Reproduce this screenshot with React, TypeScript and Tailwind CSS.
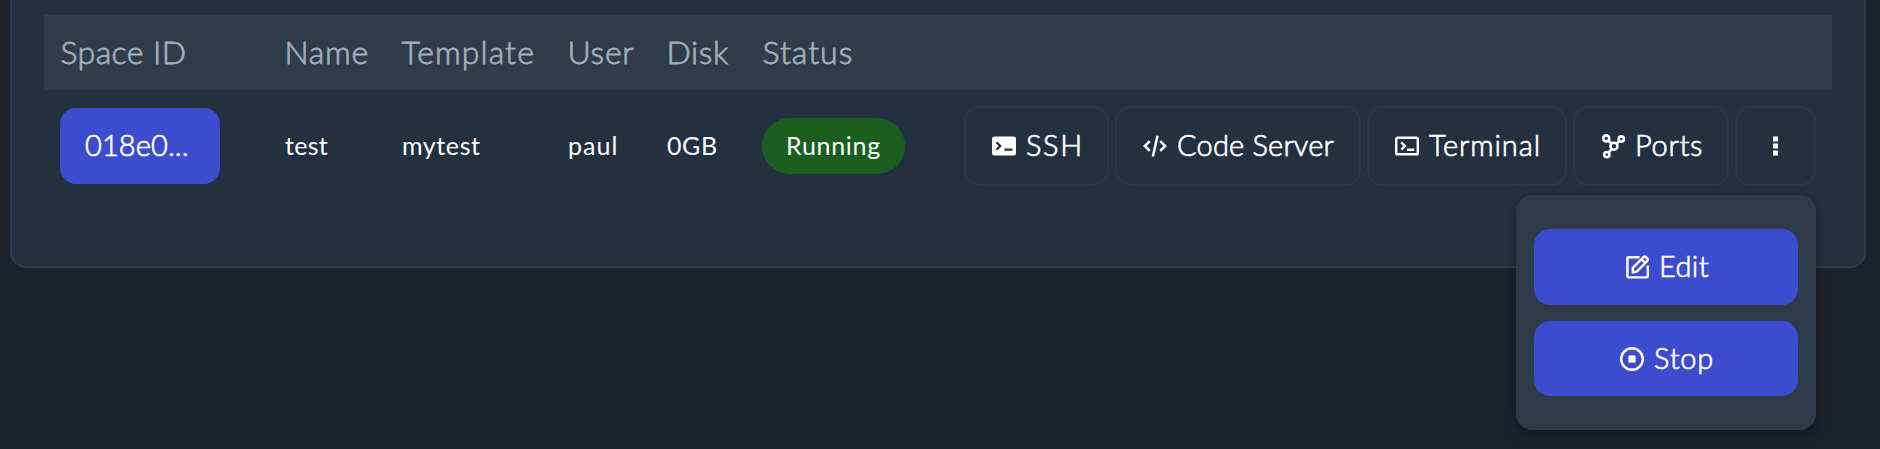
import React from "react";

const icon = "h-[30px] w-[30px] shrink-0";

const SshIcon = () => (
  <svg viewBox="0 0 30 30" className={icon} fill="none">
    <rect x="3" y="5.5" width="24" height="19" rx="2.5" fill="#fff" />
    <path d="M7.5 11.3l3.7 3.7-3.7 3.7M15.5 18.7h8" stroke="#233040" strokeWidth="2.3" />
  </svg>
);
const CodeIcon = () => (
  <svg viewBox="0 0 30 30" className={icon} fill="none" stroke="#fff" strokeWidth="2.5">
    <path d="M9.8 10.2L4.8 15l5 4.8M20.2 10.2l5 4.8-5 4.8M17.5 4.7l-4.6 20.8" />
  </svg>
);
const TerminalIcon = () => (
  <svg viewBox="0 0 30 30" className={icon} fill="none" stroke="#fff" strokeWidth="2.4">
    <rect x="4.2" y="6.7" width="21.6" height="16.6" rx="1.4" />
    <path d="M9.2 11.3l3.7 3.7-3.7 3.7M15 18.7h7.2" />
  </svg>
);
const PortsIcon = () => (
  <svg viewBox="0 0 30 30" className={icon} fill="none" stroke="#fff" strokeWidth="2.6">
    <circle cx="8.2" cy="7.4" r="3" />
    <circle cx="23.3" cy="8" r="2.6" />
    <circle cx="16" cy="15.2" r="3.5" />
    <circle cx="8.8" cy="23.6" r="2.6" />
    <path d="M10.4 9.5l3 3M21.4 9.9l-2.8 2.8M13.7 18l-3.2 3.7" />
  </svg>
);
const DotsIcon = () => (
  <svg viewBox="0 0 30 30" className={icon} fill="#fff">
    <rect x="13" y="5.5" width="5" height="5" />
    <rect x="13" y="12.5" width="5" height="5" />
    <rect x="13" y="19.5" width="5" height="5" />
  </svg>
);
const EditIcon = () => (
  <svg viewBox="0 0 30 30" className={icon} fill="none" stroke="#fff" strokeWidth="2.4" strokeLinejoin="round">
    <path d="M16.5 5.2H5.6a1.2 1.2 0 0 0-1.2 1.2v17.8a1.2 1.2 0 0 0 1.2 1.2h18a1.2 1.2 0 0 0 1.2-1.2V13.5" />
    <path d="M9.8 20.4v-4.6L20.4 5.2a1.8 1.8 0 0 1 2.5 0l1.3 1.3a1.8 1.8 0 0 1 0 2.5L14 19.4l-4.2 1zM18.6 7.4l3.6 3.6" />
  </svg>
);
const StopIcon = () => (
  <svg viewBox="0 0 30 30" className={icon}>
    <circle cx="15" cy="15" r="10.8" fill="none" stroke="#fff" strokeWidth="2.4" />
    <rect x="11.4" y="11.4" width="7.2" height="7.2" fill="#fff" />
  </svg>
);

type ActionProps = { className: string; icon: React.ReactNode; label?: string; text?: string };

const Action = ({ className, icon, label, text = "" }: ActionProps) => (
  <button className={`flex h-20 items-center rounded-[16px] border-2 border-[#2a3746] pl-[23px] text-[29px] font-light text-white [-webkit-text-stroke:0.7px] ${className}`}>
    {icon}
    {label && <span className={`ml-[7px] whitespace-nowrap pb-[2px] ${text}`}>{label}</span>}
  </button>
);

export default function App() {
  return (
    <div className="h-[449px] overflow-hidden bg-[#1b222c] font-['Lato',sans-serif]">
      <main className="ml-[10px] h-[268px] w-[1856px] rounded-b-[16px] border-2 border-t-0 border-[#2e3b48] bg-[#233040] pl-8 pt-[15px]">
        <div className="grid h-[75px] w-[1788px] grid-cols-[224px_117px_166px_99px_96px_1fr] items-center bg-[#2f3c49] pb-[2px] pl-[16.5px] text-[32px] font-light text-[#a2afbd] [-webkit-text-stroke:0.8px]">
          <span className="tracking-[0.4px]">Space ID</span>
          <span className="tracking-[0.7px]">Name</span>
          <span className="tracking-[1.1px]">Template</span>
          <span className="tracking-[0.7px]">User</span>
          <span className="tracking-[0.6px]">Disk</span>
          <span className="tracking-[1px]">Status</span>
        </div>
        <div className="grid h-28 w-[1788px] grid-cols-[224px_117px_166px_99px_96px_202px_1fr] items-center pl-4 text-[25px] text-white">
          <button className="flex h-[76px] w-40 items-center rounded-[16px] bg-[#3c4ccf] pb-[2px] pl-[25px] text-[29px] font-light tracking-[0.1px] [-webkit-text-stroke:0.7px]">018e0...</button>
          <span className="pb-[1px] pl-[1px] tracking-[0.3px]">test</span>
          <span className="pb-[1px] pl-[1px] tracking-[0.6px]">mytest</span>
          <span className="pb-[1px] pl-[1px] tracking-[1px]">paul</span>
          <span className="pb-[1px] pl-[1px] tracking-[0.6px]">0GB</span>
          <span className="flex h-14 w-[143px] items-center justify-center rounded-full bg-[#1a5e20] pb-[1px] tracking-[0.7px]">Running</span>
          <div className="relative flex gap-[6px]">
            <Action className="w-[145px]" icon={<SshIcon />} label="SSH" text="tracking-[1.6px]" />
            <Action className="w-[246px]" icon={<CodeIcon />} label="Code Server" text="tracking-[0.2px]" />
            <Action className="w-[200px]" icon={<TerminalIcon />} label="Terminal" text="tracking-[0.9px]" />
            <Action className="w-[156px]" icon={<PortsIcon />} label="Ports" text="tracking-[0.7px]" />
            <Action className="w-[81px]" icon={<DotsIcon />} />
            <div className="absolute left-[552px] top-[89px] flex h-[235px] w-[300px] flex-col gap-4 rounded-[16px] bg-[#2d3a47] px-[18px] pt-[34px] text-[29px] font-light shadow-[0_4px_12px_rgba(0,0,0,0.35)] [-webkit-text-stroke:0.7px]">
              <button className="flex h-[76px] items-center rounded-[16px] bg-[#3c4ccf] pl-[89px]">
                <EditIcon />
                <span className="ml-[6px] pb-[2px] tracking-[0.4px]">Edit</span>
              </button>
              <button className="flex h-[75px] items-center rounded-[16px] bg-[#3c4ccf] pl-[83px]">
                <StopIcon />
                <span className="ml-[7px] pb-[1px] tracking-[0.8px]">Stop</span>
              </button>
            </div>
          </div>
        </div>
      </main>
    </div>
  );
}
